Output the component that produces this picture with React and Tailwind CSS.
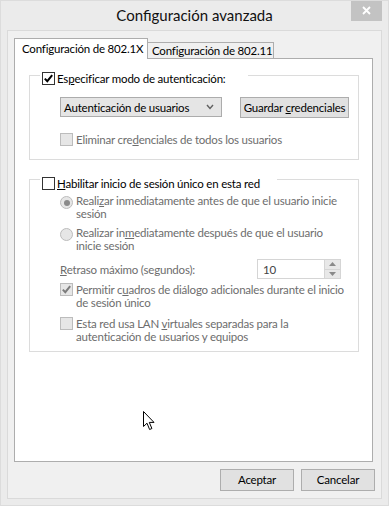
const font = { fontFamily: "'Segoe UI', Lato, 'Liberation Sans', sans-serif" };

function Check({ checked, disabled }) {
  return (
    <span
      className={
        disabled
          ? "flex h-[13px] w-[13px] shrink-0 items-center justify-center border border-[#bcbcbc] bg-[#e6e6e6]"
          : "flex h-[13px] w-[13px] shrink-0 items-center justify-center border border-[#333333] bg-white"
      }
    >
      {checked && (
        <svg width="11" height="11" viewBox="0 0 11 11">
          <path
            d="M1.8 5.6 L4.3 8.2 L9.2 2.2"
            fill="none"
            stroke={disabled ? "#7c7c7c" : "#000"}
            strokeWidth="2"
          />
        </svg>
      )}
    </span>
  );
}

function Radio({ checked }) {
  return (
    <span className="mt-[2px] flex h-[13px] w-[13px] shrink-0 items-center justify-center rounded-full border border-[#bcbcbc] bg-[#e6e6e6]">
      {checked && <span className="h-[6px] w-[6px] rounded-full bg-[#8a8a8a]" />}
    </span>
  );
}

export default function App() {
  return (
    <div
      className="relative flex h-[506px] w-[389px] flex-col overflow-hidden whitespace-nowrap border border-[#dcdcdc] bg-[#ebebeb] text-[11.5px] tracking-[-0.2px] text-black"
      style={font}
    >
      {/* title bar */}
      <div className="relative flex h-[29px] shrink-0 items-center justify-center">
        <span className="pb-[1px] text-[15px] tracking-normal text-[#111]">Configuración avanzada</span>
        <div className="absolute right-[6px] top-[-1px] flex h-[21px] w-[31px] items-center justify-center bg-[#c3c3c3]">
          <svg width="9" height="9" viewBox="0 0 9 9">
            <path d="M1 1 L8 8 M8 1 L1 8" stroke="#fff" strokeWidth="1.8" />
          </svg>
        </div>
      </div>

      {/* client area */}
      <div className="mx-[6px] flex h-[469px] flex-col border border-[#dadada] bg-[#f0f0f0] pt-[7px]">
        {/* tabs */}
        <div className="flex h-[20px] items-end pl-[6px]">
          <div className="relative z-10 -mb-px flex h-[21px] w-[134px] items-start border border-b-0 border-[#adadad] bg-white pl-[7px] pt-[3px] leading-[14px]">
            Configuración de 802.1X
          </div>
          <div className="flex h-[16px] w-[126px] items-center border border-b-0 border-l-0 border-[#adadad] bg-[#f0f0f0] pl-[4px] leading-[14px]">
            Configuración de 802.11
          </div>
        </div>

        {/* panel */}
        <div className="ml-[6px] h-[404px] w-[359px] border border-[#adadad] bg-white px-[14px] leading-[13px]">
          {/* group 1 */}
          <div className="mt-[16px] w-[330px] border border-[#dcdcdc] pb-[13px]">
            <div className="-mt-[4px] ml-[10px] flex w-[208px] items-center gap-[2px] bg-white pl-[2px]">
              <Check checked />
              <span>
                Es<u>p</u>ecificar modo de autenticación:
              </span>
            </div>
            <div className="ml-[30px] mt-[12px] flex">
              <div className="flex h-[20px] w-[162px] items-center justify-between border border-[#acacac] bg-[#e5e5e5] pl-[3px] pr-[7px]">
                <span>Autenticación de usuarios</span>
                <svg width="8" height="6" viewBox="0 0 8 6">
                  <path d="M1 1 L4 4.5 L7 1" fill="none" stroke="#606060" strokeWidth="1.4" />
                </svg>
              </div>
              <div className="ml-[18px] flex h-[21px] w-[109px] items-center justify-center border border-[#adadad] bg-[#e1e1e1]">
                <span>
                  Guardar <u>c</u>redenciales
                </span>
              </div>
            </div>
            <div className="ml-[30px] mt-[15px] flex items-center gap-[3px] text-[#6d6d6d]">
              <Check disabled />
              <span>
                Eliminar cre<u>d</u>enciales de todos los usuarios
              </span>
            </div>
          </div>

          {/* group 2 */}
          <div className="mt-[19px] w-[330px] border border-[#dcdcdc] pb-[8px]">
            <div className="-mt-[3px] ml-[10px] flex w-[237px] items-center gap-[2px] bg-white pl-[2px]">
              <Check />
              <span>
                <u>H</u>abilitar inicio de sesión único en esta red
              </span>
            </div>
            <div className="pl-[30px] text-[#6d6d6d]">
              <div className="mt-[4px] flex items-start gap-[3px]">
                <Radio checked />
                <span>
                  Reali<u>z</u>ar inmediatamente antes de que el usuario inicie
                  <br />
                  sesión
                </span>
              </div>
              <div className="mt-[6px] flex items-start gap-[3px]">
                <Radio />
                <span>
                  Realizar in<u>m</u>ediatamente después de que el usuario
                  <br />
                  inicie sesión
                </span>
              </div>
              <div className="mt-[7px] flex h-[20px] items-center">
                <span className="w-[197px]">
                  <u>R</u>etraso máximo (segundos):
                </span>
                <div className="flex h-[20px] w-[84px] border border-[#d5d5d5] bg-white">
                  <span className="flex flex-1 items-center pl-[5px] text-[#444]">10</span>
                  <div className="flex w-[16px] flex-col border-l border-[#d5d5d5]">
                    <div className="flex flex-1 items-center justify-center border-b border-[#d5d5d5] bg-[#e8e8e8]">
                      <svg width="7" height="4" viewBox="0 0 7 4">
                        <path d="M0 4 L3.5 0 L7 4 Z" fill="#8a8a8a" />
                      </svg>
                    </div>
                    <div className="flex flex-1 items-center justify-center bg-[#e8e8e8]">
                      <svg width="7" height="4" viewBox="0 0 7 4">
                        <path d="M0 0 L3.5 4 L7 0 Z" fill="#8a8a8a" />
                      </svg>
                    </div>
                  </div>
                </div>
              </div>
              <div className="mt-[4px] flex items-start gap-[3px]">
                <Check checked disabled />
                <span>
                  Permitir c<u>u</u>adros de diálogo adicionales durante el inicio
                  <br />
                  de sesión único
                </span>
              </div>
              <div className="mt-[8px] flex items-start gap-[3px]">
                <Check disabled />
                <span>
                  Esta red usa LAN <u>v</u>irtuales separadas para la
                  <br />
                  autenticación de usuarios y equipos
                </span>
              </div>
            </div>
          </div>
        </div>

        {/* dialog buttons */}
        <div className="mt-[7px] flex justify-end gap-[7px] pr-[6px]">
          <div className="flex h-[22px] w-[74px] items-center justify-center border border-[#adadad] bg-[#e1e1e1]">
            Aceptar
          </div>
          <div className="flex h-[22px] w-[74px] items-center justify-center border border-[#adadad] bg-[#e1e1e1]">
            Cancelar
          </div>
        </div>
      </div>

      {/* mouse pointer */}
      <svg className="absolute left-[142px] top-[410px]" width="13" height="20" viewBox="0 0 13 20">
        <path
          d="M0.5 0.5 L0.5 15.5 L4 12.2 L6.6 18.5 L8.9 17.5 L6.3 11.4 L11 11.4 Z"
          fill="#fff"
          stroke="#000"
          strokeWidth="1"
          strokeLinejoin="round"
        />
      </svg>
    </div>
  );
}
